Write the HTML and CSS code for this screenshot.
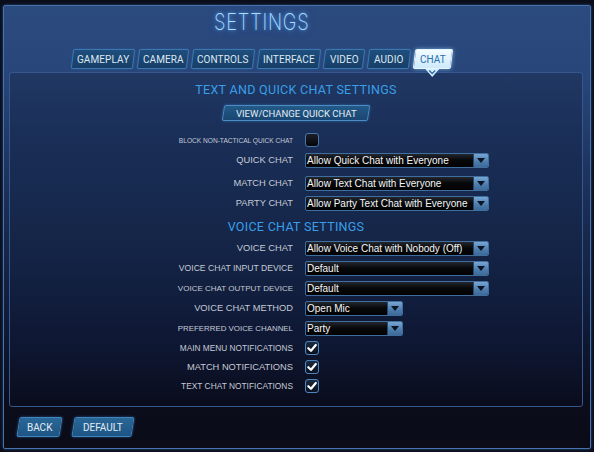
FILE: index.html
```html
<!DOCTYPE html>
<html>
<head>
<meta charset="utf-8">
<link rel="stylesheet" href="styles.css">
</head>
<body>
<div class="frame">
  <h1 class="title"><span>SETTINGS</span></h1>
  <nav class="tabs">
    <div class="tab w62"><span>GAMEPLAY</span></div>
    <div class="tab w50"><span>CAMERA</span></div>
    <div class="tab w62"><span>CONTROLS</span></div>
    <div class="tab w62"><span>INTERFACE</span></div>
    <div class="tab w40"><span>VIDEO</span></div>
    <div class="tab w42"><span>AUDIO</span></div>
    <div class="tab w38 active"><span>CHAT</span>
      <svg class="pointer" width="14" height="9" viewBox="0 0 14 9"><path d="M0 0 H14 L7 8 Z" fill="#d6efff"/><path d="M4 1.5 L7 4.5 L10 1.5" fill="none" stroke="#2d6fae" stroke-width="1.4"/></svg>
    </div>
  </nav>
  <main class="panel">
    <h2 class="section">TEXT AND QUICK CHAT SETTINGS</h2>
    <div class="btn-row"><div class="btn quick"><span>VIEW/CHANGE QUICK CHAT</span></div></div>
    <div class="rows">
      <div class="row first"><span class="lbl f66">BLOCK NON-TACTICAL QUICK CHAT</span><span class="check"></span></div>
      <div class="row"><span class="lbl">QUICK CHAT</span><div class="select long"><span class="val">Allow Quick Chat with Everyone</span><span class="arrow"><svg width="8" height="5" viewBox="0 0 8 5"><path d="M0 0 H8 L4 5 Z" fill="#0b1526"/></svg></span></div></div>
      <div class="row gap3"><span class="lbl">MATCH CHAT</span><div class="select long"><span class="val">Allow Text Chat with Everyone</span><span class="arrow"><svg width="8" height="5" viewBox="0 0 8 5"><path d="M0 0 H8 L4 5 Z" fill="#0b1526"/></svg></span></div></div>
      <div class="row"><span class="lbl">PARTY CHAT</span><div class="select long"><span class="val">Allow Party Text Chat with Everyone</span><span class="arrow"><svg width="8" height="5" viewBox="0 0 8 5"><path d="M0 0 H8 L4 5 Z" fill="#0b1526"/></svg></span></div></div>
    </div>
    <h2 class="section voice">VOICE CHAT SETTINGS</h2>
    <div class="rows">
      <div class="row gap3"><span class="lbl">VOICE CHAT</span><div class="select long"><span class="val">Allow Voice Chat with Nobody (Off)</span><span class="arrow"><svg width="8" height="5" viewBox="0 0 8 5"><path d="M0 0 H8 L4 5 Z" fill="#0b1526"/></svg></span></div></div>
      <div class="row"><span class="lbl f86">VOICE CHAT INPUT DEVICE</span><div class="select long"><span class="val">Default</span><span class="arrow"><svg width="8" height="5" viewBox="0 0 8 5"><path d="M0 0 H8 L4 5 Z" fill="#0b1526"/></svg></span></div></div>
      <div class="row"><span class="lbl f80">VOICE CHAT OUTPUT DEVICE</span><div class="select long"><span class="val">Default</span><span class="arrow"><svg width="8" height="5" viewBox="0 0 8 5"><path d="M0 0 H8 L4 5 Z" fill="#0b1526"/></svg></span></div></div>
      <div class="row"><span class="lbl">VOICE CHAT METHOD</span><div class="select short"><span class="val">Open Mic</span><span class="arrow"><svg width="8" height="5" viewBox="0 0 8 5"><path d="M0 0 H8 L4 5 Z" fill="#0b1526"/></svg></span></div></div>
      <div class="row"><span class="lbl f79">PREFERRED VOICE CHANNEL</span><div class="select short"><span class="val">Party</span><span class="arrow"><svg width="8" height="5" viewBox="0 0 8 5"><path d="M0 0 H8 L4 5 Z" fill="#0b1526"/></svg></span></div></div>
      <div class="row cb"><span class="lbl f83">MAIN MENU NOTIFICATIONS</span><span class="check on"><svg width="12" height="12" viewBox="0 0 12 12"><path d="M2.3 6.2 L5 8.8 L9.8 3" fill="none" stroke="#fff" stroke-width="2.2" stroke-linecap="round" stroke-linejoin="round"/></svg></span></div>
      <div class="row cb"><span class="lbl">MATCH NOTIFICATIONS</span><span class="check on"><svg width="12" height="12" viewBox="0 0 12 12"><path d="M2.3 6.2 L5 8.8 L9.8 3" fill="none" stroke="#fff" stroke-width="2.2" stroke-linecap="round" stroke-linejoin="round"/></svg></span></div>
      <div class="row cb"><span class="lbl f84">TEXT CHAT NOTIFICATIONS</span><span class="check on"><svg width="12" height="12" viewBox="0 0 12 12"><path d="M2.3 6.2 L5 8.8 L9.8 3" fill="none" stroke="#fff" stroke-width="2.2" stroke-linecap="round" stroke-linejoin="round"/></svg></span></div>
    </div>
  </main>
  <footer class="footer">
    <div class="btn foot back"><span>BACK</span></div>
    <div class="btn foot"><span>DEFAULT</span></div>
  </footer>
</div>
</body>
</html>
```

FILE: styles.css
```css
* { box-sizing: border-box; }
html, body { margin: 0; padding: 0; }
body {
  width: 594px;
  height: 452px;
  overflow: hidden;
  background: #0a0d1a;
  padding: 5px 3px 0 3px;
  font-family: Roboto, "Liberation Sans", sans-serif;
}
.frame {
  width: 588px;
  height: 444px;
  border: 1px solid #4573ad;
  border-radius: 2px;
  box-shadow: 0 0 3px rgba(80,140,220,0.5);
  background: linear-gradient(180deg, #2b4a7e 0px, #28467a 70px, #1a2d55 200px, #101a36 320px, #0b0d1b 400px, #0a0b17 444px);
  display: flex;
  flex-direction: column;
}
.title {
  margin: 0;
  height: 32px;
  line-height: 32px;
  text-align: center;
  padding-right: 70px;
  font-family: Inter, Roboto, sans-serif;
  font-weight: 200;
  font-size: 23px;
  letter-spacing: 1px;
  color: #a9dcff;
  text-shadow: 0 0 4px rgba(90,170,255,0.9), 0 0 8px rgba(60,140,240,0.6);
}
.title span {
  display: inline-block;
  transform: scaleX(0.8);
}
.tabs {
  margin: 11px 0 0 68px;
  display: flex;
  gap: 4px;
  height: 20px;
}
.tab {
  position: relative;
  height: 20px;
  transform: skewX(-7deg);
  background: linear-gradient(180deg, #1f4e7d, #173e68);
  border: 1px solid #3b78ae;
  border-radius: 2px;
  display: flex;
  align-items: center;
  justify-content: center;
  box-shadow: 0 0 2px rgba(60,140,220,0.4);
}
.tab.w62 { width: 62px; }
.tab.w50 { width: 50px; }
.tab.w40 { width: 40px; }
.tab.w42 { width: 42px; }
.tab.w38 { width: 38px; }
.tab span {
  display: block;
  transform: skewX(7deg);
  font-size: 10px;
  font-weight: 400;
  color: #dde8f1;
  letter-spacing: 0.1px;
}
.tab.active {
  background: linear-gradient(180deg, #f2fbff, #cdeafc);
  border-color: #e6f6ff;
  box-shadow: 0 0 4px rgba(150,210,255,0.7);
}
.tab.active span { color: #2c6dac; }
.pointer {
  position: absolute;
  left: 50%;
  top: 19px;
  margin-left: -6px;
  transform: skewX(7deg);
}
.panel {
  margin: 3px 7px 0 5px;
  height: 335px;
  border: 1px solid #34578e;
  border-radius: 3px;
  background: linear-gradient(180deg, #203863 0px, #1a2f58 60px, #142446 180px, #0e1733 270px, #0a0c1b 335px);
  padding-top: 9px;
}
.section {
  margin: 0;
  height: 16px;
  line-height: 16px;
  text-align: center;
  font-weight: 400;
  font-size: 12.5px;
  color: #3a9fe9;
  letter-spacing: 0.3px;
}
.section.voice { margin-top: 6px; }
.btn-row {
  display: flex;
  justify-content: center;
  margin-top: 7px;
}
.btn {
  transform: skewX(-9deg);
  background: linear-gradient(180deg, #235a88, #1a4672);
  border: 1px solid #4a8cc4;
  border-radius: 2px;
  display: flex;
  align-items: center;
  justify-content: center;
  box-shadow: 0 0 3px rgba(70,150,230,0.5);
}
.btn span {
  transform: skewX(9deg);
  color: #e3ecf3;
  font-weight: 400;
}
.btn.quick { width: 146px; height: 16px; }
.btn.quick span { font-size: 9.5px; }
.rows {
  display: flex;
  flex-direction: column;
}
.row {
  display: grid;
  grid-template-columns: 283px auto;
  column-gap: 12px;
  align-items: center;
  height: 20px;
}
.row.first { margin-top: 9px; }
.row.gap3 { margin-top: 3px; }
.row.cb { height: 19px; }
.lbl {
  text-align: right;
  font-family: "Liberation Sans", Arial, sans-serif;
  font-size: 9.3px;
  color: #c5cad6;
  white-space: nowrap;
}
.lbl.f66 { font-size: 6.6px; }
.lbl.f86 { font-size: 8.6px; }
.lbl.f80 { font-size: 8px; }
.lbl.f79 { font-size: 7.9px; }
.lbl.f83 { font-size: 8.3px; }
.lbl.f84 { font-size: 8.4px; }
.check {
  width: 14px;
  height: 14px;
  border: 1px solid #4b77a6;
  border-radius: 3px;
  background: linear-gradient(180deg, #1c1f28, #050609);
  display: flex;
  align-items: center;
  justify-content: center;
}
.check.on { border-color: #4f86bd; background: linear-gradient(180deg, #1b2a40, #0a1220); }
.select {
  height: 15px;
  border: 1px solid #3f6d9e;
  border-radius: 2px;
  background: linear-gradient(180deg, #23272e 0px, #07080a 6px, #000 15px);
  display: flex;
  align-items: center;
  overflow: hidden;
}
.select.long { width: 184px; }
.select.short { width: 98px; }
.val {
  flex: 1;
  padding-left: 1px;
  font-family: "Liberation Sans", Arial, sans-serif;
  font-size: 10px;
  color: #f4f6f8;
  white-space: nowrap;
  overflow: hidden;
}
.arrow {
  width: 15px;
  height: 100%;
  background: linear-gradient(180deg, #77a6d3, #4c7cac 60%, #3d6a99);
  border-left: 1px solid #26476c;
  display: flex;
  align-items: center;
  justify-content: center;
}
.footer {
  margin: 10px 0 0 14px;
  display: flex;
  gap: 12px;
}
.btn.foot {
  height: 20px;
  padding: 0 9px;
  background: linear-gradient(180deg, #2a6796, #1d5585);
  border-color: #3f86c0;
}
.btn.foot span { font-size: 10px; }
.btn.back { width: 43px; }
```
